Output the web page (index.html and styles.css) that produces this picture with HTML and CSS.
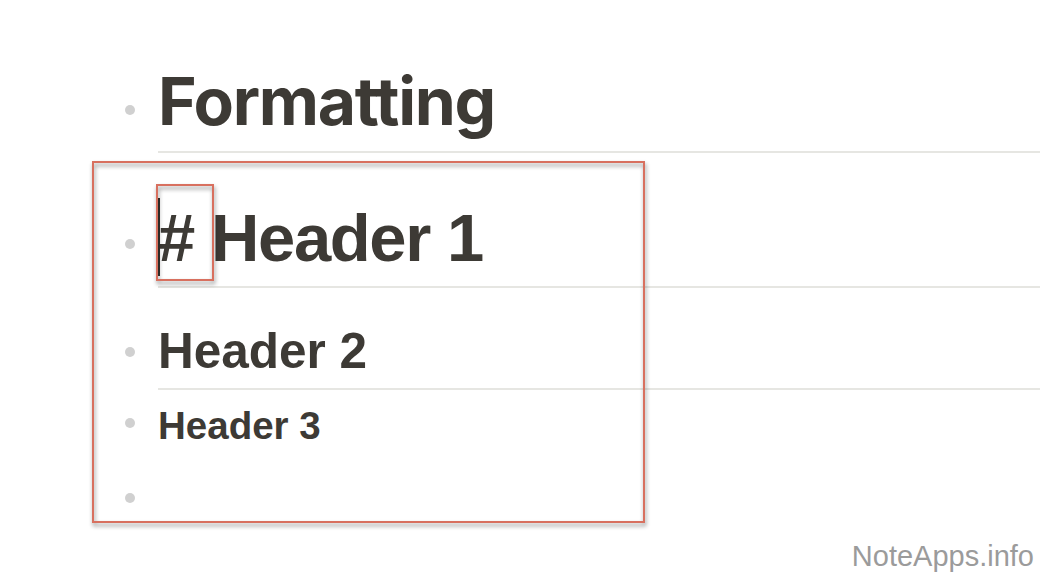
FILE: index.html
```html
<!DOCTYPE html>
<html>
<head>
<meta charset="utf-8">
<link rel="stylesheet" href="styles.css">
</head>
<body>
<div class="page">
  <ul class="outline">
    <li class="row row-title">
      <span class="bullet"></span>
      <div class="content"><span class="title">Formatting</span></div>
    </li>
    <li class="row row-h1">
      <span class="bullet"></span>
      <div class="content"><span class="h1">#&nbsp;Header 1</span></div>
    </li>
    <li class="row row-h2">
      <span class="bullet"></span>
      <div class="content"><span class="h2">Header 2</span></div>
    </li>
    <li class="row row-h3">
      <span class="bullet"></span>
      <div class="content nodiv"><span class="h3">Header 3</span></div>
    </li>
    <li class="row row-empty">
      <span class="bullet"></span>
      <div class="content nodiv"><span class="empty"></span></div>
    </li>
  </ul>
  <div class="mark-outer"></div>
  <div class="mark-inner"></div>
  <div class="cursor"></div>
  <div class="watermark">NoteApps.info</div>
</div>
</body>
</html>
```

FILE: styles.css
```css
html, body {
  margin: 0;
  padding: 0;
  background: #ffffff;
}

.page {
  position: relative;
  width: 1040px;
  height: 582px;
  overflow: hidden;
  font-family: "Liberation Sans", Arial, sans-serif;
  color: #3d3a35;
}

.outline {
  list-style: none;
  margin: 0;
  padding: 0;
  display: flex;
  flex-direction: column;
}

.row {
  display: flex;
  align-items: flex-start;
}

.bullet {
  flex: none;
  width: 10px;
  height: 10px;
  border-radius: 50%;
  background: #d0d0d0;
  margin-left: 125px;
  margin-right: 23px;
}

.content {
  flex: 1;
  border-bottom: 2px solid #e6e6e2;
}

.content.nodiv {
  border-bottom: none;
}

.content span {
  display: block;
  white-space: nowrap;
}

.title {
  font-family: "Inter", "Liberation Sans", sans-serif;
  font-weight: 700;
  font-size: 66px;
  line-height: 80px;
  letter-spacing: -1.3px;
}

.row-title .content {
  padding-top: 61px;
  padding-bottom: 10px;
}
.row-title .bullet { margin-top: 105px; }

.h1 {
  font-weight: 700;
  font-size: 67px;
  line-height: 80px;
  letter-spacing: -1.4px;
}
.row-h1 .content {
  padding-top: 45px;
  padding-bottom: 8px;
}
.row-h1 .bullet { margin-top: 86px; }

.h2 {
  font-weight: 700;
  font-size: 49.5px;
  line-height: 60px;
}
.row-h2 .content {
  padding-top: 33px;
  padding-bottom: 7px;
}
.row-h2 .bullet { margin-top: 59px; }

.h3 {
  font-weight: 700;
  font-size: 38.5px;
  line-height: 46px;
}
.row-h3 .content {
  padding-top: 13px;
}
.row-h3 .bullet { margin-top: 28px; }

.empty {
  height: 46px;
}
.row-empty .content {
  padding-top: 26px;
}
.row-empty .bullet { margin-top: 44px; }

.mark-outer {
  position: absolute;
  left: 92px;
  top: 161px;
  width: 549px;
  height: 358px;
  border: 2px solid #d8705f;
  filter: drop-shadow(1px 3px 2px rgba(0, 0, 0, 0.45));
}

.mark-inner {
  position: absolute;
  left: 156px;
  top: 184px;
  width: 54px;
  height: 93px;
  border: 2px solid #d8705f;
  filter: drop-shadow(1px 3px 2px rgba(0, 0, 0, 0.45));
}

.cursor {
  position: absolute;
  left: 158px;
  top: 198px;
  width: 2px;
  height: 78px;
  background: #2b2925;
}

.watermark {
  position: absolute;
  right: 6px;
  bottom: 9px;
  font-family: "Liberation Sans", Arial, sans-serif;
  font-size: 29px;
  line-height: 34px;
  color: #9b9b9b;
}
```
